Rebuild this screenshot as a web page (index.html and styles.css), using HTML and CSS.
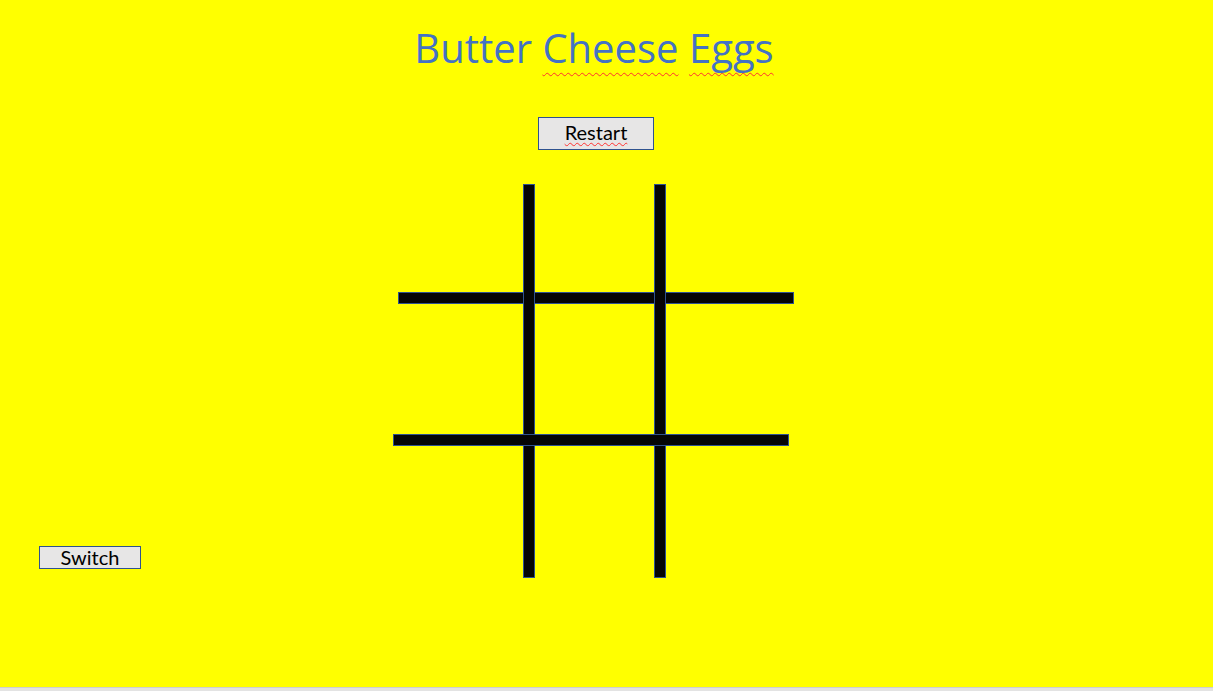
FILE: index.html
```html
<!DOCTYPE html>
<html>
<head>
<meta charset="utf-8">
<title>Butter Cheese Eggs</title>
<link rel="stylesheet" href="styles.css">
</head>
<body>
<div class="page">
  <header class="header">
    <h1 class="title">Butter <span class="spell">Cheese</span> <span class="spell">Eggs</span></h1>
    <button class="btn btn-restart"><span class="spell spell-small">Restart</span></button>
  </header>
  <main class="play">
    <button class="btn btn-switch">Switch</button>
    <div class="board">
      <div class="bar bar-h bar-h1"></div>
      <div class="bar bar-v bar-v1"></div>
      <div class="bar bar-v bar-v2"></div>
      <div class="bar bar-h bar-h2"></div>
    </div>
  </main>
</div>
<div class="statusbar"></div>
</body>
</html>
```
FILE: styles.css
```css
html, body {
  margin: 0;
  padding: 0;
  height: 691px;
  overflow: hidden;
  background: #ffff00;
  font-family: Lato, "Open Sans", sans-serif;
}

.page {
  height: 687px;
  display: flex;
  flex-direction: column;
  padding-top: 27px;
  box-sizing: border-box;
}

.header {
  width: 1188px;
  display: flex;
  flex-direction: column;
  align-items: center;
}

.title {
  margin: 0;
  font-family: "Open Sans", sans-serif;
  font-weight: 400;
  font-size: 40px;
  line-height: 41px;
  color: #4472c4;
  font-variant-ligatures: none;
}

.spell {
  text-decoration: underline wavy #ff3030;
  text-decoration-thickness: 1px;
  text-underline-offset: 9px;
  text-decoration-skip-ink: none;
}

.spell-small {
  text-underline-offset: 2px;
}

.btn {
  font-family: Lato, "Open Sans", sans-serif;
  font-size: 20px;
  color: #000;
  background: #e7e6e6;
  border: 1px solid #2f528f;
  box-sizing: border-box;
  padding: 0;
  display: flex;
  align-items: center;
  justify-content: center;
  font-variant-ligatures: none;
}

.btn-restart {
  margin-top: 49px;
  margin-left: 4px;
  width: 116px;
  height: 33px;
  padding-bottom: 4px;
}

.btn-switch {
  width: 102px;
  height: 23px;
  padding-bottom: 2px;
  align-self: flex-end;
  margin-bottom: 9px;
}

.play {
  margin-top: 34px;
  padding-left: 39px;
  display: flex;
  align-items: flex-start;
}

.board {
  position: relative;
  margin-left: 252px;
  width: 401px;
  height: 394px;
}

.bar {
  position: absolute;
  background: #050505;
  border: 1px solid #2f528f;
  box-sizing: border-box;
}

.bar-v {
  top: 0;
  width: 12px;
  height: 394px;
}

.bar-v1 { left: 130px; }
.bar-v2 { left: 261px; }

.bar-h {
  width: 396px;
  height: 12px;
}

.bar-h1 { left: 5px; top: 108px; }
.bar-h2 { left: 0; top: 250px; }

.statusbar {
  height: 4px;
  background: #e3e3e3;
  border-top: 1px solid #cfcfcf;
  box-sizing: border-box;
}
```
